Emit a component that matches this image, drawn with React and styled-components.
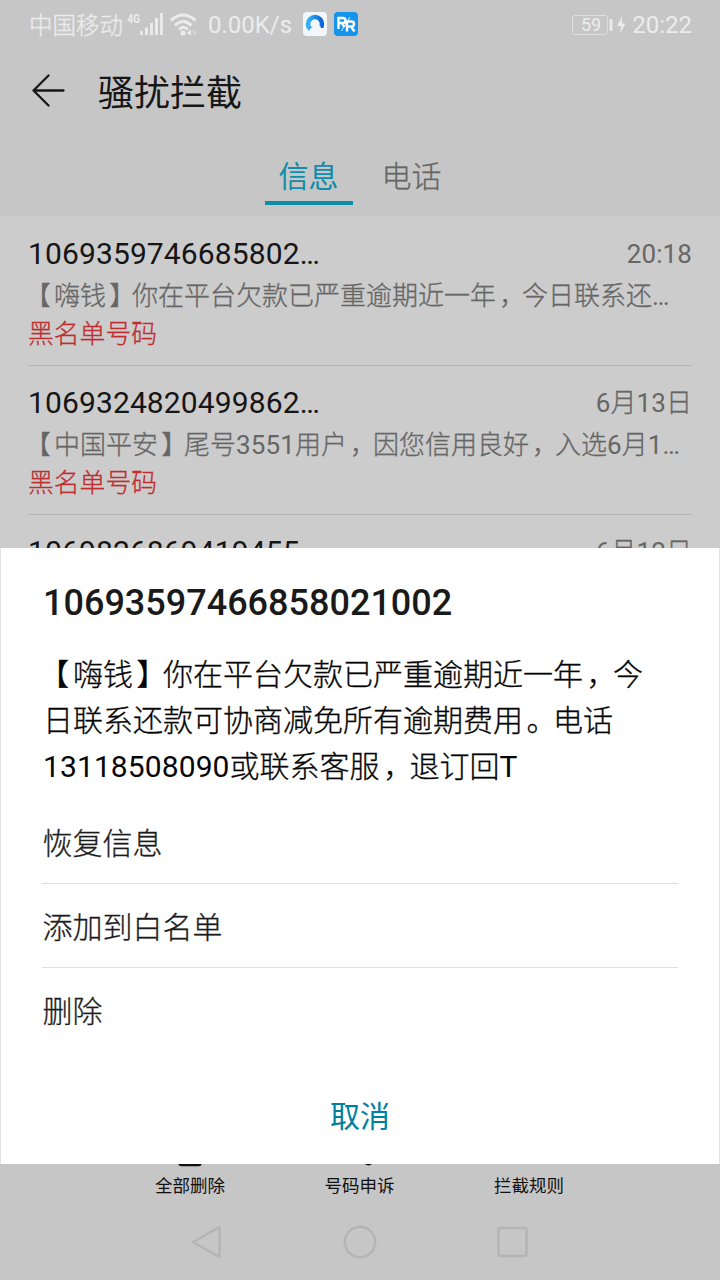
import React from 'react';
import styled, { createGlobalStyle } from 'styled-components';

const GlobalStyle = createGlobalStyle`
  * {
    box-sizing: border-box;
  }
  body {
    margin: 0;
    background: #cccccc;
    font-family: Roboto, 'Noto Sans CJK SC', sans-serif;
  }
`;

const Screen = styled.div`
  position: relative;
  display: flex;
  flex-direction: column;
  width: 720px;
  height: 1280px;
  overflow: hidden;
  background: #cccccc;
`;

/* Light Chinese glyphs, thickened a little; numbers stay regular */
const Thin = styled.span`
  font-weight: 300;
  -webkit-text-stroke: 0.3px currentColor;
`;

const Latin = styled.span`
  font-weight: 400;
  letter-spacing: 0.1px;
  -webkit-text-stroke: 0;
`;

const OpenMark = styled.span`
  margin: 0 0.13em 0 -0.13em;
`;

const CloseMark = styled.span`
  margin-left: 0.12em;
  letter-spacing: -0.12em;
`;

const Header = styled.header`
  flex-shrink: 0;
  height: 216px;
  background: #c6c6c6;
`;

const StatusBar = styled.div`
  display: flex;
  align-items: center;
  height: 48px;
  padding: 1px 28px 0 29px;
  color: #ececec;
  font-size: 24px;
  line-height: 30px;
`;

const Carrier = styled.span`
  width: 98px;
  padding-top: 2px;
  font-size: 23.5px;
  white-space: nowrap;
`;

const Signal = styled.svg`
  margin-right: 7px;
`;

const Wifi = styled.svg`
  margin-right: 10px;
`;

const Speed = styled.span`
  width: 95px;
  padding-top: 1px;
  white-space: nowrap;
`;

const AppIcon = styled.svg`
  margin: 0 6.5px 1px 0;
`;

const StatusRight = styled.div`
  display: flex;
  align-items: center;
  margin-left: auto;
  font-size: 24px;
`;

const Clock = styled.span`
  width: 60px;
  padding-top: 1px;
  text-align: right;
`;

const Battery = styled.span`
  display: flex;
  align-items: center;
  justify-content: center;
  width: 36px;
  height: 20px;
  padding-left: 2px;
  border: 1.5px solid #dedede;
  border-radius: 3px;
  font-size: 18px;
  line-height: 18px;
`;

const BatteryTip = styled.svg`
  margin-right: 5px;
`;

const TopBar = styled.div`
  display: flex;
  align-items: center;
  height: 88px;
  padding: 0 0 2px 31px;
`;

const Title = styled.h1`
  margin: 0 0 0 32px;
  padding-top: 5px;
  color: #171717;
  font-size: 36px;
  font-weight: 400;
  line-height: 48px;
`;

const Tabs = styled.nav`
  display: flex;
  justify-content: center;
  gap: 15px;
  height: 70px;
`;

const Tab = styled.div`
  width: 88px;
  height: 69px;
  padding-top: 19px;
  border-bottom: 4px solid ${(props) => (props.$active ? '#108dab' : 'transparent')};
  color: ${(props) => (props.$active ? '#108dab' : '#666666')};
  font-size: 30px;
  line-height: 44px;
  text-align: center;
`;

const List = styled.ul`
  flex: 1;
  margin: 0;
  padding: 0 28px;
  list-style: none;
  overflow: hidden;
`;

const Row = styled.li`
  height: ${(props) => (props.$first ? 150 : 149)}px;
  padding-top: ${(props) => (props.$first ? 19 : 18)}px;
  border-bottom: 1px solid #b4b4b4;
`;

const RowTop = styled.div`
  display: flex;
  align-items: center;
  justify-content: space-between;
  height: 38px;
`;

const Sender = styled.span`
  color: #151515;
  font-size: 30px;
  letter-spacing: 0.12px;
  line-height: 38px;
`;

const Time = styled.span`
  color: #666666;
  font-size: 26px;
  line-height: 38px;
`;

const Preview = styled.div`
  height: 39px;
  color: #666666;
  font-size: 26px;
  line-height: 46px;
  white-space: nowrap;
`;

const Tag = styled.div`
  height: 38px;
  color: #bf2e31;
  font-size: 25.8px;
  line-height: 45px;
`;

const Toolbar = styled.footer`
  display: flex;
  flex-shrink: 0;
  justify-content: center;
  gap: 99px;
  height: 94px;
  padding: 29px 1px 0 0;
  background: #c6c6c6;
`;

const Action = styled.div`
  display: flex;
  flex-direction: column;
  align-items: center;
  gap: 6px;
  width: 70.5px;
  color: #111111;
  font-size: 17.5px;
  line-height: 26px;
  white-space: nowrap;
`;

const NavBar = styled.div`
  display: flex;
  flex-shrink: 0;
  align-items: center;
  justify-content: center;
  gap: 119px;
  height: 76px;
  background: #c6c6c6;
`;

const NavIcon = styled.svg`
  fill: none;
  stroke: #b4b4b4;
  stroke-width: 2.4;
  stroke-linejoin: round;
`;

/* The sheet floats over the dimmed list */
const Sheet = styled.section`
  position: absolute;
  top: 548px;
  left: 0;
  width: 720px;
  height: 616px;
  padding: 31px 41px 0;
  border: solid #e2e2e2;
  border-width: 0 1px;
  background: #ffffff;
`;

const SheetTitle = styled.h2`
  margin: 0 0 0 1px;
  color: #1a1a1a;
  font-size: 36px;
  font-weight: 500;
  line-height: 48px;
`;

const Message = styled.p`
  margin: 25px 0 10px 1px;
  color: #050505;
  font-size: 30px;
  line-height: 46px;
  white-space: nowrap;
`;

const Option = styled.div`
  height: 84px;
  padding: 1px 0 0 0.5px;
  border-bottom: 1px solid ${(props) => (props.$last ? 'transparent' : '#dfdfdf')};
  color: #1c1c1c;
  font-size: 30px;
  line-height: 85px;
`;

const Cancel = styled.div`
  margin-top: 43px;
  color: #007f9f;
  font-size: 30px;
  line-height: 44px;
  text-align: center;
`;

// Splits mixed text so that numbers and full-width marks get their own style
const Mixed = ({ children }) => (
  <Thin>
    {children.split(/([0-9A-Za-z:…]+|[【】，。])/).map((part, i) => {
      if (i % 2 === 0) return part;
      if (part === '【') return <OpenMark key={i}>{part}</OpenMark>;
      if ('】，。'.includes(part)) return <CloseMark key={i}>{part}</CloseMark>;
      return <Latin key={i}>{part}</Latin>;
    })}
  </Thin>
);

const TrashIcon = () => (
  <svg width="28" height="28" viewBox="0 0 28 28" fill="none" stroke="#111111" strokeWidth="2.4">
    <path d="M2 6 H26 M10 6 V2 H18 V6 M3.500 6 V24 Q3.500 26 5.500 26 H22.500 Q24.500 26 24.500 24 V6" />
  </svg>
);

const AppealIcon = () => (
  <svg width="28" height="28" viewBox="0 0 28 28" fill="none" stroke="#111111" strokeWidth="2.4">
    <path d="M8 14 V10 Q8 3 14 3 Q20 3 20 10 V14 M14 3 V1" />
    <circle cx="22.5" cy="21.5" r="5" fill="#111111" stroke="none" />
  </svg>
);

const RulesIcon = () => (
  <svg width="28" height="28" viewBox="0 0 28 28" fill="none" stroke="#111111" strokeWidth="2.4">
    <path d="M14 2 L24 5 V13 Q23 20 14 23 Q5 20 4 13 V5 Z" />
  </svg>
);

const rows = [
  {
    sender: '1069359746685802…',
    time: '20:18',
    preview: '【嗨钱】你在平台欠款已严重逾期近一年，今日联系还…',
    tag: '黑名单号码',
  },
  {
    sender: '1069324820499862…',
    time: '6月13日',
    preview: '【中国平安】尾号3551用户，因您信用良好，入选6月1…',
    tag: '黑名单号码',
  },
  { sender: '1069826869419455', time: '6月12日', preview: '', tag: '' },
];

const App = () => (
  <>
    <GlobalStyle />
    <Screen>
      <Header>
        <StatusBar>
          <Carrier>
            <Thin>中国移动</Thin>
          </Carrier>
          <Signal width="36" height="34" viewBox="0 -4 36 34">
            <text x="0.5" y="11" fill="#ececec" fontSize="13.5" fontWeight="700" textLength="12.5" lengthAdjust="spacingAndGlyphs">
              4G
            </text>
            <path
              d="M14.500 19 V23 M19.500 15.500 V23 M24.500 11 V23 M29.500 6 V23 M34.500 1 V23"
              stroke="#ececec"
              strokeWidth="2.8"
            />
          </Signal>
          <Wifi width="28" height="24" viewBox="0 0 28 24" fill="none" stroke="#ececec">
            <path d="M1 7.500 Q13 -3.500 25.500 7.500 M5 12.500 Q13 4.500 21.500 12.500 M9 16.500 Q13 12 18 16.500" strokeWidth="3" />
            <circle cx="13" cy="20" r="2.5" fill="#ececec" stroke="none" />
            <path d="M17 20 L21 16.500 V22.500 Z" fill="#ececec" stroke="none" />
            <path d="M23 16.500 L27 20 L23 22.500 Z" fill="#d6d6d6" stroke="none" />
          </Wifi>
          <Speed>0.00K/s</Speed>
          <AppIcon width="24" height="24" viewBox="0 0 24 24">
            <defs>
              <linearGradient id="ring" x1="0" y1="0" x2="1" y2="0">
                <stop offset="0" stopColor="#35b4f5" />
                <stop offset="1" stopColor="#0a62d8" />
              </linearGradient>
            </defs>
            <rect width="24" height="24" rx="4" fill="#f4f7fa" />
            <circle cx="12" cy="12" r="7" fill="none" stroke="url(#ring)" strokeWidth="4.5" />
            <path
              d="M8 23 Q5 21 6.500 18 Q8 15 10 16 Q11.500 12 15.500 13 Q18 14 18 16 Q22.500 15.500 22.500 19.500 Q22 23 19 23 Z"
              fill="#f4f7fa"
            />
          </AppIcon>
          <AppIcon width="24" height="24" viewBox="0 0 24 24">
            <rect width="24" height="24" rx="4" fill="#1594ee" />
            <path
              d="M4.500 17 V6 H9 Q11.500 6 11.500 8.500 Q11.500 11 9 11 H5 M8 11.500 L10.500 15 M13 19.500 V9.500 H17.500 Q20 9.500 20 12 Q20 14.500 17.500 14.500 H13.500 M17 14.500 L20.500 19.500"
              fill="none"
              stroke="#ffffff"
              strokeWidth="2.4"
            />
            <path d="M7.500 19 L16 5" stroke="#ffffff" strokeWidth="0.8" />
          </AppIcon>
          <StatusRight>
            <Battery>59</Battery>
            <BatteryTip width="19" height="20" viewBox="0 0 19 20" fill="#ececec">
              <rect x="1.5" y="4" width="3" height="12" rx="1" />
              <path d="M14 1.500 L9 11 H13 L12 18.500 L17.500 8.500 H14 Z" />
            </BatteryTip>
            <Clock>20:22</Clock>
          </StatusRight>
        </StatusBar>
        <TopBar>
          <svg width="35" height="34" viewBox="0 0 35 34">
            <path
              d="M17.500 1.500 L2.500 16.500 L17.500 31.500 M2.500 16.500 H32.500"
              fill="none"
              stroke="#171717"
              strokeWidth="2.3"
              strokeLinecap="round"
              strokeLinejoin="round"
            />
          </svg>
          <Title>骚扰拦截</Title>
        </TopBar>
        <Tabs>
          <Tab $active>信息</Tab>
          <Tab>
            <Thin>电话</Thin>
          </Tab>
        </Tabs>
      </Header>
      <List>
        {rows.map((row, i) => (
          <Row key={row.sender} $first={i === 0}>
            <RowTop>
              <Sender>{row.sender}</Sender>
              <Time>
                <Mixed>{row.time}</Mixed>
              </Time>
            </RowTop>
            <Preview>
              <Mixed>{row.preview}</Mixed>
            </Preview>
            <Tag>
              <Thin>{row.tag}</Thin>
            </Tag>
          </Row>
        ))}
      </List>
      <Toolbar>
        <Action>
          <TrashIcon />
          全部删除
        </Action>
        <Action>
          <AppealIcon />
          号码申诉
        </Action>
        <Action>
          <RulesIcon />
          拦截规则
        </Action>
      </Toolbar>
      <NavBar>
        <NavIcon width="34" height="34" viewBox="0 0 34 34">
          <path d="M3 17 L29.500 2 V32 Z" />
        </NavIcon>
        <NavIcon width="34" height="34" viewBox="0 0 34 34">
          <circle cx="17" cy="17" r="15.2" />
        </NavIcon>
        <NavIcon width="34" height="34" viewBox="0 0 34 34">
          <rect x="2.5" y="3" width="28" height="28" rx="1.5" />
        </NavIcon>
      </NavBar>
      <Sheet>
        <SheetTitle>10693597466858021002</SheetTitle>
        <Message>
          <Mixed>【嗨钱】你在平台欠款已严重逾期近一年，今</Mixed>
          <br />
          <Mixed>日联系还款可协商减免所有逾期费用。电话</Mixed>
          <br />
          <Mixed>13118508090或联系客服，退订回T</Mixed>
        </Message>
        <Option>
          <Thin>恢复信息</Thin>
        </Option>
        <Option>
          <Thin>添加到白名单</Thin>
        </Option>
        <Option $last>
          <Thin>删除</Thin>
        </Option>
        <Cancel>取消</Cancel>
      </Sheet>
    </Screen>
  </>
);

export default App;
